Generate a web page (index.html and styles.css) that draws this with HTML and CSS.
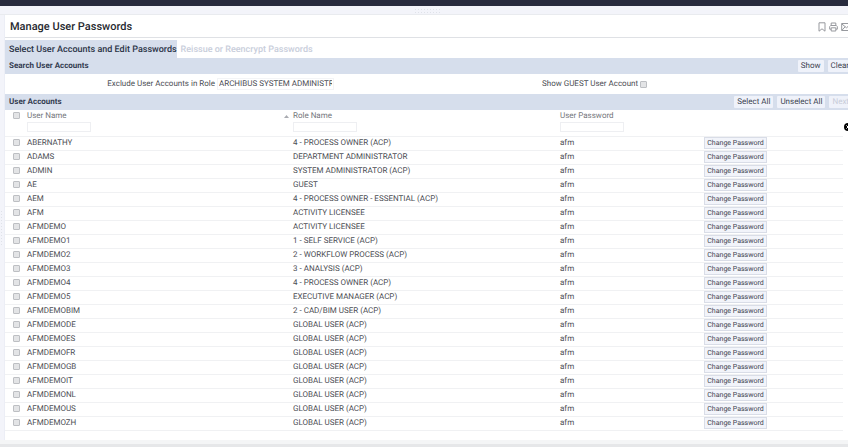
FILE: index.html
```html
<!DOCTYPE html>
<html lang="en">
<head>
<meta charset="utf-8">
<title>Manage User Passwords</title>
<link rel="stylesheet" href="styles.css">
</head>
<body>
<div class="topbar"></div>
<div class="splitter"><span class="grip"></span></div>
<div class="workspace">
<div class="gutter"><span class="grip grip-side"></span></div>
<main class="panel">
<header class="title-row">
<h1>Manage User Passwords</h1>
<div class="tools">
<button class="tool" aria-label="Bookmark"><svg width="8" height="10" viewBox="0 0 8 10"><path d="M1 .8h6v8.4L4 6.8 1 9.2z"/></svg></button>
<button class="tool" aria-label="Print"><svg width="9" height="10" viewBox="0 0 9 10"><path d="M2.2 3.5V1h4.6v2.5M2 7.2H.7V4.6l1-1.1h5.6l1 1.1v2.6H7M2.2 5.8h4.6V9H2.2z"/></svg></button>
<button class="tool" aria-label="Mail"><svg width="11" height="10" viewBox="0 0 11 10"><path d="M.7 1.5h9.6v7H.7zM.7 1.8l4.8 4 4.8-4M.9 8.3l3.2-3.5M10.1 8.3L6.9 4.8"/></svg></button>
</div>
</header>
<nav class="tabs">
<a class="tab active" href="#select">Select User Accounts and Edit Passwords</a>
<a class="tab" href="#reissue">Reissue or Reencrypt Passwords</a>
</nav>
<section>
<div class="bar"><h2>Search User Accounts</h2><div class="actions"><button class="btn">Show</button><button class="btn">Clear</button></div></div>
<form class="search">
<div class="field"><label for="role">Exclude User Accounts in Role</label><input class="role" id="role" type="text" value="ARCHIBUS SYSTEM ADMINISTRATOR"></div>
<div class="field"><label for="guest">Show GUEST User Account</label><input class="check" id="guest" type="checkbox"></div>
</form>
</section>
<section class="accounts">
<div class="bar"><h2>User Accounts</h2><div class="actions"><button class="btn">Select All</button><button class="btn">Unselect All</button><button class="btn" disabled>Next</button></div></div>
<table>
<colgroup><col class="c-check"><col class="c-name"><col class="c-role"><col class="c-pass"><col class="c-action"></colgroup>
<thead>
<tr><th><input class="check" type="checkbox" aria-label="Select all users"></th><th><div class="sorted">User Name<svg width="5" height="3" viewBox="0 0 5 3"><path d="M0 3L2.5 0 5 3z"/></svg></div></th><th>Role Name</th><th>User Password</th><th></th></tr>
<tr class="filters"><td></td><td><input type="text" aria-label="Filter user name"></td><td><input type="text" aria-label="Filter role name"></td><td><input type="text" aria-label="Filter user password"></td><td><button class="clear" aria-label="Clear filters"><svg width="8" height="8" viewBox="0 0 8 8"><circle cx="4" cy="4" r="4"/><path d="M2.4 2.4l3.2 3.2M5.6 2.4L2.4 5.6"/></svg></button></td></tr>
</thead>
<tbody>
<tr><td><input class="check" type="checkbox" aria-label="ABERNATHY"></td><td>ABERNATHY</td><td>4 - PROCESS OWNER (ACP)</td><td>afm</td><td><button class="change">Change Password</button></td></tr>
<tr><td><input class="check" type="checkbox" aria-label="ADAMS"></td><td>ADAMS</td><td>DEPARTMENT ADMINISTRATOR</td><td>afm</td><td><button class="change">Change Password</button></td></tr>
<tr><td><input class="check" type="checkbox" aria-label="ADMIN"></td><td>ADMIN</td><td>SYSTEM ADMINISTRATOR (ACP)</td><td>afm</td><td><button class="change">Change Password</button></td></tr>
<tr><td><input class="check" type="checkbox" aria-label="AE"></td><td>AE</td><td>GUEST</td><td>afm</td><td><button class="change">Change Password</button></td></tr>
<tr><td><input class="check" type="checkbox" aria-label="AEM"></td><td>AEM</td><td>4 - PROCESS OWNER - ESSENTIAL (ACP)</td><td>afm</td><td><button class="change">Change Password</button></td></tr>
<tr><td><input class="check" type="checkbox" aria-label="AFM"></td><td>AFM</td><td>ACTIVITY LICENSEE</td><td>afm</td><td><button class="change">Change Password</button></td></tr>
<tr><td><input class="check" type="checkbox" aria-label="AFMDEMO"></td><td>AFMDEMO</td><td>ACTIVITY LICENSEE</td><td>afm</td><td><button class="change">Change Password</button></td></tr>
<tr><td><input class="check" type="checkbox" aria-label="AFMDEMO1"></td><td>AFMDEMO1</td><td>1 - SELF SERVICE (ACP)</td><td>afm</td><td><button class="change">Change Password</button></td></tr>
<tr><td><input class="check" type="checkbox" aria-label="AFMDEMO2"></td><td>AFMDEMO2</td><td>2 - WORKFLOW PROCESS (ACP)</td><td>afm</td><td><button class="change">Change Password</button></td></tr>
<tr><td><input class="check" type="checkbox" aria-label="AFMDEMO3"></td><td>AFMDEMO3</td><td>3 - ANALYSIS (ACP)</td><td>afm</td><td><button class="change">Change Password</button></td></tr>
<tr><td><input class="check" type="checkbox" aria-label="AFMDEMO4"></td><td>AFMDEMO4</td><td>4 - PROCESS OWNER (ACP)</td><td>afm</td><td><button class="change">Change Password</button></td></tr>
<tr><td><input class="check" type="checkbox" aria-label="AFMDEMO5"></td><td>AFMDEMO5</td><td>EXECUTIVE MANAGER (ACP)</td><td>afm</td><td><button class="change">Change Password</button></td></tr>
<tr><td><input class="check" type="checkbox" aria-label="AFMDEMOBIM"></td><td>AFMDEMOBIM</td><td>2 - CAD/BIM USER (ACP)</td><td>afm</td><td><button class="change">Change Password</button></td></tr>
<tr><td><input class="check" type="checkbox" aria-label="AFMDEMODE"></td><td>AFMDEMODE</td><td>GLOBAL USER (ACP)</td><td>afm</td><td><button class="change">Change Password</button></td></tr>
<tr><td><input class="check" type="checkbox" aria-label="AFMDEMOES"></td><td>AFMDEMOES</td><td>GLOBAL USER (ACP)</td><td>afm</td><td><button class="change">Change Password</button></td></tr>
<tr><td><input class="check" type="checkbox" aria-label="AFMDEMOFR"></td><td>AFMDEMOFR</td><td>GLOBAL USER (ACP)</td><td>afm</td><td><button class="change">Change Password</button></td></tr>
<tr><td><input class="check" type="checkbox" aria-label="AFMDEMOGB"></td><td>AFMDEMOGB</td><td>GLOBAL USER (ACP)</td><td>afm</td><td><button class="change">Change Password</button></td></tr>
<tr><td><input class="check" type="checkbox" aria-label="AFMDEMOIT"></td><td>AFMDEMOIT</td><td>GLOBAL USER (ACP)</td><td>afm</td><td><button class="change">Change Password</button></td></tr>
<tr><td><input class="check" type="checkbox" aria-label="AFMDEMONL"></td><td>AFMDEMONL</td><td>GLOBAL USER (ACP)</td><td>afm</td><td><button class="change">Change Password</button></td></tr>
<tr><td><input class="check" type="checkbox" aria-label="AFMDEMOUS"></td><td>AFMDEMOUS</td><td>GLOBAL USER (ACP)</td><td>afm</td><td><button class="change">Change Password</button></td></tr>
<tr><td><input class="check" type="checkbox" aria-label="AFMDEMOZH"></td><td>AFMDEMOZH</td><td>GLOBAL USER (ACP)</td><td>afm</td><td><button class="change">Change Password</button></td></tr>
</tbody>
</table>
</section>
</main>
</div>
<footer class="bottom"></footer>
</body>
</html>
```
FILE: styles.css
```css
* { box-sizing: border-box; }
body {
  margin: 0;
  min-height: 100vh;
  display: flex;
  flex-direction: column;
  overflow: hidden;
  background: #f3f4fa;
  color: #4c4e54;
  font: 8px/12px Roboto, sans-serif;
  text-rendering: geometricPrecision;
}
button, input { font: inherit; color: inherit; margin: 0; text-rendering: inherit; }
h1, h2 { margin: 0; color: #333b50; }
.topbar { height: 6px; background: #282b3e; }
.splitter { height: 9px; display: flex; justify-content: center; align-items: center; border-bottom: 1px solid #e9ebef; }
.grip { width: 28px; height: 5px; margin-left: 8px; background: radial-gradient(#dfe2e9 1px, transparent 1px) 0 0 / 3px 3px; }
.grip-side { width: 5px; height: 36px; margin: 0; }
.workspace { flex: 1; display: flex; }
.gutter { width: 5px; display: flex; align-items: center; border-right: 1px solid #eceef6; }
.panel { flex: 1; min-width: 0; background: #fff; }
.title-row { height: 23px; padding-left: 5px; display: flex; align-items: center; justify-content: space-between; border-bottom: 1px solid #dfe1e5; }
h1 { font-size: 11px; line-height: 16px; font-weight: 500; color: #26282e; padding-top: 2px; }
.tools { display: flex; gap: 3px; margin-right: -4px; padding-top: 2px; }
.tool { padding: 0; border: 0; background: none; display: flex; }
.tool svg { fill: none; stroke: #97999e; stroke-width: 1; }
.tabs { display: flex; padding-top: 2px; }
.tab { padding: 4px 4px 2px; font-size: 9px; font-weight: 500; color: #c9cedb; text-decoration: none; }
.tab.active { padding-right: 0; background: #d6deec; color: #2c3447; }
.bar { height: 16px; padding-left: 4px; display: flex; align-items: center; justify-content: space-between; background: #d6deec; }
h2 { font-size: 8px; font-weight: 700; }
.actions { display: flex; gap: 4px; margin-right: -4px; }
.btn { height: 12px; padding: 0 3px; border: 0; border-radius: 1px; background: #eff2fa; line-height: 12px; color: #3d4350; }
.btn:disabled { color: #c8ccd8; }
.search { height: 20px; display: grid; grid-template-columns: 329px 1fr; align-items: center; }
.field { display: flex; justify-content: flex-end; align-items: center; gap: 2px; }
.field:last-child { justify-content: flex-start; padding-left: 208px; }
.role { width: 117px; height: 12px; padding: 0 1px; border: 1px solid #f3f4f6; background: #fff; }
.check { appearance: none; display: block; width: 7px; height: 7px; border: 1px solid #bdbfc3; border-radius: 1px; background: #e3e4e6; }
table { width: calc(100% - 5px); border-collapse: collapse; table-layout: fixed; }
.c-check { width: 22px; }
.c-name { width: 266px; }
.c-role { width: 267px; }
.c-pass { width: 144px; }
th, td { padding: 0; text-align: left; font-weight: 400; }
th { height: 12px; color: #74767b; }
th:first-child, td:first-child { padding: 2px 0 0 8px; vertical-align: top; }
.sorted { display: flex; justify-content: space-between; align-items: center; padding-right: 4px; }
.sorted svg { fill: #a9abb1; }
.filters td { height: 14px; vertical-align: top; }
.filters input { display: block; width: 64px; height: 10px; border: 1px solid #eeeff2; padding: 0 2px; }
.clear { display: block; margin: 0 -9px 0 auto; padding: 1px 0 0; border: 0; background: none; }
.clear svg { display: block; }
.clear path { stroke: #fff; }
tbody td { height: 14px; border-top: 1px solid #f0f1f3; }
tbody tr:last-child td { border-bottom: 1px solid #f0f1f3; }
.change { display: block; width: 63px; height: 12px; padding: 0; border: 1px solid #d9dde7; background: #f2f4fa; font-size: 7px; line-height: 10px; color: #3d4350; }
.bottom { height: 7px; background: #f4f5f6; border-bottom: 3px solid #e6e7e9; }
```
